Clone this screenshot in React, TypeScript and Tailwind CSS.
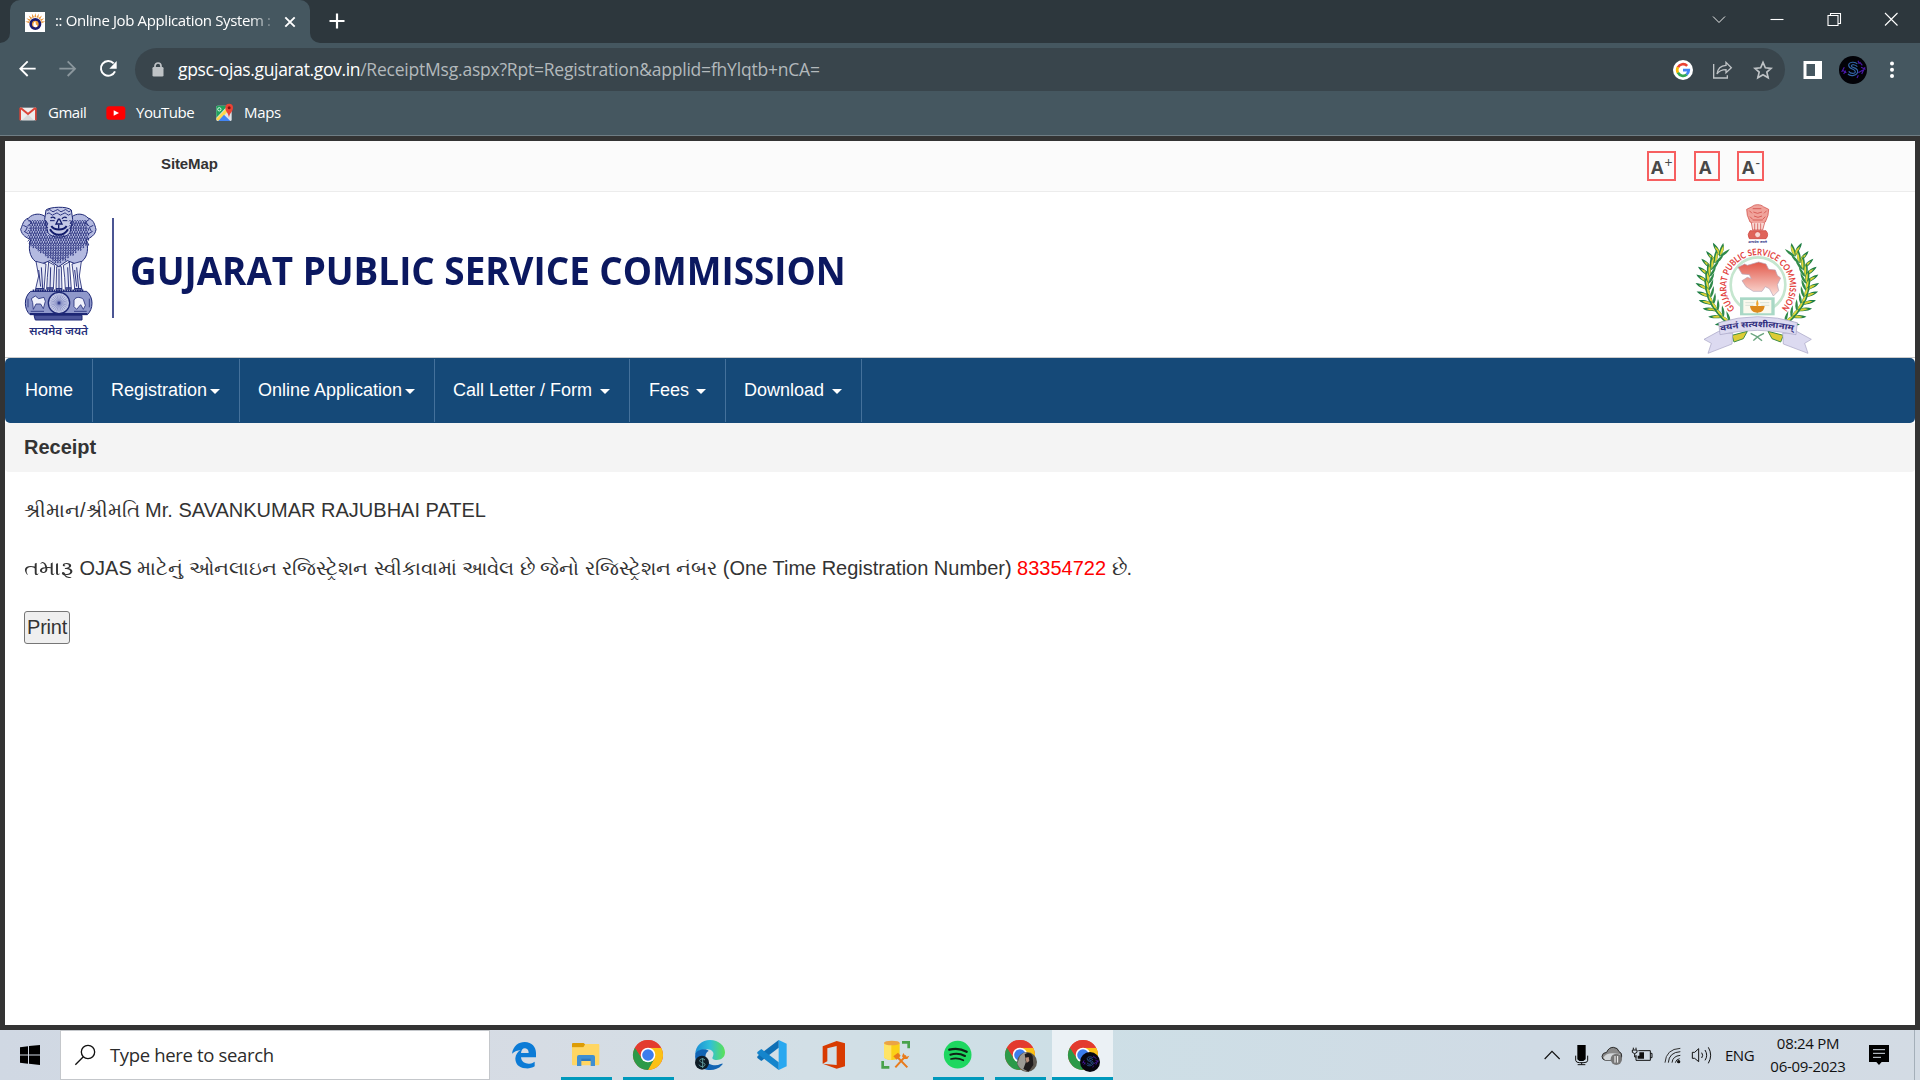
import React from "react";

const UI = "font-['Open_Sans','Noto_Sans',sans-serif]";

/* ---------- Browser chrome ---------- */

function Favicon() {
  const rays = [-80, -60, -40, -20, 0, 20, 40, 60, 80];
  return (
    <svg width="20" height="20" viewBox="0 0 60 60" className="shrink-0">
      <rect width="60" height="60" fill="#fff" />
      {rays.map((a) => (
        <path key={a} d="M28 16 L31 3 L34 16Z" fill="#e8953a" transform={`rotate(${a} 31 34)`} />
      ))}
      <circle cx="31" cy="36" r="14" fill="#f4a23c" stroke="#1a1a6e" strokeWidth="8" />
      <path d="M31 28 C22 34 24 46 31 46 C39 46 38 38 33 38Z" fill="#fff" />
    </svg>
  );
}

function TabStrip() {
  return (
    <div className="flex h-[43px] bg-[#2d373d] text-white">
      <div className="flex w-[10px] items-end bg-[#455760]">
        <div className="h-full w-full rounded-br-[10px] bg-[#2d373d]" />
      </div>
      <div className="flex h-[43px] w-[300px] items-center rounded-t-[10px] bg-[#455760] pl-[15px] pr-[14px]">
        <Favicon />
        <span
          className={`-mt-[2px] ml-[10px] w-[222px] whitespace-nowrap text-[15px] tracking-[-0.38px] [mask-image:linear-gradient(to_right,black_195px,transparent_224px)] ${UI}`}
        >
          :: Online Job Application System :
        </span>
        <svg width="12" height="12" viewBox="0 0 12 12" className="ml-[7px] shrink-0">
          <path d="M1.3 1.3 L10.7 10.7 M10.7 1.3 L1.3 10.7" stroke="#fff" strokeWidth="1.9" />
        </svg>
      </div>
      <div className="w-[10px] bg-[#455760]">
        <div className="h-full w-full rounded-bl-[10px] bg-[#2d373d]" />
      </div>
      <svg width="16" height="16" viewBox="0 0 16 16" className="ml-[9px] mt-[13px]">
        <path d="M8 0.5 V15.5 M0.5 8 H15.5" stroke="#fff" strokeWidth="2.2" />
      </svg>
      <div className="ml-auto flex">
        <WindowButton>
          <path d="M2 5.5 L8 11.5 L14 5.500" strokeWidth="0.9" />
        </WindowButton>
        <WindowButton>
          <path d="M1.5 8.5 H14.5" />
        </WindowButton>
        <WindowButton>
          <path d="M2 4.5 H12 V14.5 H2Z M4.5 4 V2.5 H14.5 V12.5 H12.5" />
        </WindowButton>
        <WindowButton>
          <path d="M2 2 L14.5 14.5 M14.5 2 L2 14.5" />
        </WindowButton>
      </div>
    </div>
  );
}

function WindowButton({ children }: { children: React.ReactNode }) {
  return (
    <div className="flex h-[37px] w-[57.3px] items-center justify-center">
      <svg width="16" height="16" viewBox="0 0 16 16" fill="none" stroke="#fff" strokeWidth="1.1">
        {children}
      </svg>
    </div>
  );
}

function GoogleIcon() {
  return (
    <svg width="20" height="20" viewBox="0 0 60 60">
      <circle cx="30" cy="30" r="30" fill="#fff" />
      <g fill="none" strokeWidth="8">
        <path d="M14.8 22 A17.5 17.5 0 0 1 42.5 17.6" stroke="#ea4335" />
        <path d="M14.8 38.5 A17.5 17.5 0 0 1 14.8 21.5" stroke="#fbbc05" />
        <path d="M41.5 43.5 A17.5 17.5 0 0 1 14.8 38" stroke="#34a853" />
        <path d="M30 30.5 H47.3 A17.5 17.5 0 0 1 41 43.4" stroke="#4285f4" />
      </g>
    </svg>
  );
}

function SAvatar({ size }: { size: number }) {
  return (
    <svg width={size} height={size} viewBox="0 0 84 84">
      <circle cx="42" cy="42" r="42" fill="#020207" />
      <SAvatarArt />
    </svg>
  );
}

function SAvatarArt() {
  return (
    <g>
      <g fill="none" stroke="#4a18a8" strokeWidth="3.500">
        <path d="M8 48 L16 34 M14 54 L20 44 M10 42 L22 50 M62 18 L70 28 M66 34 L80 40 M58 50 L72 42 M68 54 L78 34 M54 66 L58 58 M57 14 L61 24" />
      </g>
      <path
        d="M55 24 C49 16 29 17 29 28 C29 41 49 37 49 47 C49 54 35 54 29 46 M55 32 C49 25 37 24 37 30 C37 36 56 34 56 46 C56 60 34 62 27 54"
        fill="none"
        stroke="#3263a6"
        strokeWidth="3.500"
      />
    </g>
  );
}

function Toolbar() {
  return (
    <div className="flex h-[48px] items-center bg-[#455760] pt-[5px]">
      <svg width="135" height="43" viewBox="0 144 405 129" fill="none" strokeWidth="5.5">
        <path d="M107 206 H61 M83 184 L61 206 L83 228" stroke="#fff" />
        <path d="M178 206 H225 M203 184 L225 206 L203 228" stroke="#8b979d" />
        <path d="M341 190 A22 22 0 1 0 345 214" stroke="#fff" strokeWidth="6" />
        <path d="M350 183 V206 H328Z" fill="#fff" />
      </svg>
      <div className="flex h-[43px] w-[1650px] items-center rounded-full bg-[#39454c]">
        <svg width="12" height="15" viewBox="0 0 12 15" className="ml-[17px]">
          <path d="M3 6 V4 A3 3 0 0 1 9 4 V6" fill="none" stroke="#bfc3c6" strokeWidth="1.7" />
          <rect x="0.5" y="5" width="11" height="9.5" rx="1.3" fill="#bfc3c6" />
        </svg>
        <div className={`-mt-px ml-[14px] whitespace-nowrap text-[17.5px] leading-[24px] ${UI}`}>
          <span className="tracking-[-0.36px] text-white">gpsc-ojas.gujarat.gov.in</span>
          <span className="tracking-[-0.21px] text-[#b3b9bc]">
            /ReceiptMsg.aspx?Rpt=Registration&amp;applid=fhYlqtb+nCA=
          </span>
        </div>
        <div className="ml-auto mr-[12px] flex items-center gap-[20px]">
          <GoogleIcon />
          <svg width="20" height="20" viewBox="340 180 60 60" fill="none" stroke="#bfc3c6" strokeWidth="4">
            <path d="M342 192 V234 H383 V226" />
            <path d="M352 222 C354 204 364 197 379 196 V187 L395 203 L379 218 V209 C366 209 358 213 352 222Z" />
          </svg>
          <svg width="20" height="20" viewBox="457 180 60 60" fill="none" stroke="#bfc3c6" strokeWidth="5">
            <path d="M487 187 L494 203.500 L511.500 205 L498.500 216.500 L502.500 233.500 L487 224.500 L471.500 233.500 L475.500 216.500 L462.500 205 L480 203.500Z" />
          </svg>
        </div>
      </div>
      <svg width="20" height="20" viewBox="0 0 20 20" className="ml-[18px]">
        <path d="M0.500 1 H19 V19 H0.500Z M3.500 4 V16 H12 V4Z" fill="#fff" fillRule="evenodd" />
      </svg>
      <div className="ml-[16px]">
        <SAvatar size={28} />
      </div>
      <svg width="6" height="20" viewBox="0 0 6 20" className="ml-[22px]" fill="#fff">
        <circle cx="3" cy="3.500" r="2" />
        <circle cx="3" cy="9.800" r="2" />
        <circle cx="3" cy="16" r="2" />
      </svg>
    </div>
  );
}

function Bookmarks() {
  return (
    <div
      className={`flex h-[45px] items-center border-b border-[#6f7d84] bg-[#455760] text-[15px] text-white ${UI}`}
    >
      <svg width="20" height="20" viewBox="0 0 60 60" className="ml-[18px]">
        <path d="M6 14 H54 V52 H6Z" fill="#ececec" />
        <path d="M12 52 L30 34 L48 52Z" fill="#d9d9d9" />
        <path d="M8 15 L30 33 L52 15" fill="none" stroke="#db4437" strokeWidth="6" />
        <path d="M6.500 14 V52 M53.500 14 V52" stroke="#db4437" strokeWidth="5" />
      </svg>
      <span className="-mt-[2px] ml-[10px] w-[38px] whitespace-nowrap tracking-[-0.5px]">Gmail</span>
      <svg width="20" height="20" viewBox="0 0 60 60" className="ml-[20px]">
        <rect x="1" y="10" width="57" height="40" rx="9" fill="#f00" />
        <path d="M23 22 L39 30 L23 38Z" fill="#fff" />
      </svg>
      <span className="-mt-[2px] ml-[10px] w-[58px] whitespace-nowrap tracking-[-0.5px]">YouTube</span>
      <svg width="20" height="20" viewBox="643 308 60 60" className="ml-[20px]">
        <rect x="650" y="316" width="46" height="46" rx="4" fill="#dfe3e6" />
        <path d="M650 320 Q650 316 654 316 H684 L650 352Z" fill="#1fa35c" />
        <path d="M649 356 L682 322 L688 330 L656 362Z" fill="#ffd84a" />
        <path d="M656 362 L673 343 L692 362Z" fill="#4285f4" />
        <circle cx="659" cy="327" r="5" fill="none" stroke="#fff" strokeWidth="2.500" />
        <path d="M688 352 C687 338 677 334 677 322 A11.500 11.500 0 0 1 700 322 C700 334 689 338 688 352Z" fill="#ea4335" />
        <circle cx="688.500" cy="322" r="4.500" fill="#811411" />
      </svg>
      <span className="-mt-[2px] ml-[10px] whitespace-nowrap tracking-[-0.35px]">Maps</span>
    </div>
  );
}

/* ---------- Emblems ---------- */

function lionCurls() {
  const marks: React.ReactNode[] = [];
  for (let r = 0; r < 17; r++) {
    const y = 92 + r * 7.5;
    const half = r < 3 ? 84 : r < 10 ? 88 : 88 - (r - 9) * 11;
    for (let x = -half; x <= half; x += 7.5) {
      const px = 175 + x + (r % 2 ? 3.7 : 0);
      if (Math.abs(px - 175) < 34 && y < 136) continue;
      marks.push(<path key={`${r}-${x}`} d={`M${px - 4} ${y + 2} q3 -6 6 0 t-2 4`} />);
    }
  }
  return marks;
}

function AshokaEmblem() {
  return (
    <svg width="87" height="137" viewBox="45 39 261 411" className="shrink-0">
      <g fill="#b4bae0" stroke="#1d2775" strokeWidth="3" strokeLinejoin="round">
        <path d="M138 82 C124 68 98 70 86 84 C68 90 68 106 62 118 C66 138 80 142 92 150 C84 172 88 200 106 214 L124 222 L150 212 L176 230 L202 212 L228 222 L246 214 C264 200 266 172 258 150 C272 142 286 136 288 118 C284 104 282 90 264 84 C252 70 228 68 214 82Z" />
        <path
          d="M108 214 L116 258 L106 300 H132 L138 222Z M146 216 L142 262 L140 298 H160 L164 226Z M170 230 L168 300 H186 L184 230Z M190 226 L194 262 L196 298 H214 L208 216Z M216 222 L222 268 L224 300 H246 L238 258 L244 214Z"
          fill="#e3e6f5"
          strokeWidth="2.500"
        />
        <path d="M138 60 C150 50 202 48 214 60 L218 88 L210 128 C200 146 154 146 144 128 L134 88Z" fill="#c3c8e6" />
      </g>
      <g fill="none" stroke="#27307c" strokeWidth="2.900">
        {lionCurls()}
        <path d="M142 62 q8 -7 12 0 t12 0 t12 0 t12 0 t12 0 t10 0 M140 72 q8 -7 12 0 t12 0 t12 0 t12 0 t12 0 t12 0" />
        <path d="M136 90 l8 12 M134 102 l10 12 M218 90 l-8 12 M220 102 l-10 12 M70 106 l12 6 l-6 12 M280 106 l-12 6 l6 12 M82 88 l14 10 l-14 10 M268 88 l-14 10 l14 10 M72 124 l14 8 M278 124 l-14 8" />
        <path d="M124 232 L128 296 M116 240 L122 290 M152 232 L150 296 M177 236 V298 M203 232 L206 296 M230 232 L236 296 M224 240 L230 290" />
        <path d="M108 296 h24 M140 294 h20 M168 296 h18 M196 294 h18 M224 296 h22" strokeWidth="4" />
      </g>
      <g fill="none" stroke="#111b6b" strokeWidth="4">
        <path d="M152 84 q8 -6 14 2 M186 86 q8 -8 14 -2 M176 86 L168 102 H186 L178 86" />
        <path d="M150 92 h14 M188 92 h14" strokeWidth="3" />
        <path d="M154 108 C162 122 192 122 200 108 M150 118 C162 140 192 140 204 118" strokeWidth="6" />
        <path d="M176 104 V116" />
      </g>
      <g stroke="#1d2775" strokeWidth="3">
        <path d="M92 304 H260 C282 322 280 358 262 374 H90 C72 358 70 322 92 304Z" fill="#8f98cb" />
        <path d="M98 302 H252" strokeWidth="7" strokeDasharray="5 2" />
        <path d="M90 372 H262" strokeWidth="6" />
        <path d="M102 376 H246 V390 H106Z" fill="#4b549a" />
        <circle cx="177" cy="339" r="32" fill="#c3c8e6" strokeWidth="4" />
      </g>
      <g stroke="#6e77b4" strokeWidth="1.500">
        {Array.from({ length: 24 }, (_, i) => (
          <path key={i} d="M177 339 V313" transform={`rotate(${i * 15} 177 339)`} />
        ))}
        <circle cx="177" cy="339" r="5" fill="#36408c" />
      </g>
      <g fill="#f0f2fb" stroke="#27307c" strokeWidth="2.500">
        <path d="M94 326 L106 318 L116 326 L132 322 L136 334 L130 356 L122 342 L108 342 L100 358 L98 338Z" />
        <path d="M222 330 C228 318 244 322 250 328 L256 346 L250 358 L242 344 L230 358 L222 350Z" />
        <path d="M84 326 V352 M268 326 V352 M92 364 H132 M222 364 H260" fill="none" />
      </g>
      <text
        x="88"
        y="434"
        textLength="176"
        lengthAdjust="spacingAndGlyphs"
        fill="#27307c"
        fontSize="33"
        fontWeight="600"
        fontFamily="'Noto Sans', 'Noto Sans Devanagari', sans-serif"
      >
        सत्यमेव जयते
      </text>
    </svg>
  );
}

function LaurelBranch() {
  const nodes: [number, number, number][] = [
    [182, 186, 16], [166, 206, 6], [154, 226, 0], [146, 247, -6], [142, 268, -10],
    [141, 290, -16], [145, 312, -22], [152, 334, -28], [164, 354, -36], [180, 374, -44], [198, 392, -54],
  ];
  return (
    <g>
      <path d="M188 172 C150 220 128 290 160 350 C180 386 210 404 240 420" fill="none" stroke="#5c8f3e" strokeWidth="3" />
      {nodes.map(([x, y, a]) => (
        <g key={y} transform={`translate(${x} ${y}) rotate(${a})`}>
          <path d="M0 14 C-8 4 -24 -2 -30 -20 C-14 -14 0 -4 0 14Z" fill="#1f7f45" />
          <path d="M0 12 C-8 4 -16 0 -22 -12 C-10 -8 0 0 0 12Z" fill="#d9cf35" />
          <path d="M0 14 C-8 -2 -4 -16 0 -28 C10 -14 8 4 0 14Z" fill="#2a8546" />
          <path d="M1 12 C-2 0 0 -12 3 -20 C8 -10 7 2 1 12Z" fill="#e2d83c" />
          <path d="M0 14 C6 0 14 -8 24 -16 C20 0 12 10 0 14Z" fill="#2f8a4a" />
        </g>
      ))}
    </g>
  );
}

function CommissionSeal() {
  return (
    <svg width="200" height="165" viewBox="0 6 600 495" className="shrink-0">
      <defs>
        <path id="sealArc" d="M225 356 A95 95 0 1 1 363 356" />
        <path id="ribbonArc" d="M182 424 Q292 398 406 424" />
        <linearGradient id="stateFill" x1="0" y1="0" x2="0" y2="1">
          <stop offset="0" stopColor="#e2584a" />
          <stop offset="1" stopColor="#fbe0da" />
        </linearGradient>
      </defs>
      <g stroke="#cc3c36" strokeWidth="2" fill="#f0a39b">
        <path d="M276 50 C284 42 302 42 310 50 L326 58 L324 76 L316 96 L306 100 H280 L270 96 L262 76 L260 58Z" />
        <path d="M274 98 L278 120 H308 L314 98" fill="#f9d8d4" />
        <path d="M270 122 H318 Q328 134 318 146 H268 Q260 134 270 122Z" fill="#e0645a" />
        <circle cx="293" cy="134" r="9" fill="#f9d8d4" />
        <path d="M268 62 l8 8 M320 62 l-8 8 M278 56 h26 M280 66 q12 8 26 0 M282 78 q12 8 24 0 M284 100 V120 M293 100 V120 M302 100 V120 M270 80 l8 8 M316 80 l-8 8 M278 90 h30" fill="none" />
      </g>
      <text x="265" y="160" textLength="56" lengthAdjust="spacingAndGlyphs" fontSize="11" fontWeight="700" fill="#3b3b8c" fontFamily="'Noto Sans', sans-serif">
        सत्यमेव जयते
      </text>
      <LaurelBranch />
      <g transform="translate(584 0) scale(-1 1)">
        <LaurelBranch />
      </g>
      <circle cx="294" cy="285" r="105" fill="#fff" />
      <circle cx="294" cy="284" r="82" fill="#fff" stroke="#c5e6cf" strokeWidth="8" />
      <path
        d="M234 232 L254 222 L262 226 L296 216 L318 222 L326 238 L346 240 L352 256 L362 264 L352 284 L356 302 L340 318 L328 296 L316 290 L306 304 L280 304 L258 290 L246 272 L262 262 L274 266 L268 254 L246 252Z"
        fill="url(#stateFill)"
        stroke="#b7a5b8"
        strokeWidth="2"
      />
      <text fontSize="27" fontWeight="700" fill="#e2413c" fontFamily="Lato, sans-serif">
        <textPath href="#sealArc" textLength="440" lengthAdjust="spacingAndGlyphs">
          GUJARAT PUBLIC SERVICE COMMISSION
        </textPath>
      </text>
      <rect x="240" y="322" width="104" height="54" fill="#a9d8c6" />
      <path d="M250 330 H290 V370 H250Z M294 330 H334 V370 H294Z" fill="#fbf9ee" />
      <path d="M256 338 H284 M256 346 H280 M300 338 H328 M304 346 H328" stroke="#c9d8cc" strokeWidth="2" />
      <path d="M270 348 H314 C312 364 302 368 292 368 C282 368 272 364 270 348Z" fill="#dd8a1d" />
      <path d="M292 330 Q299 342 292 350 Q285 342 292 330Z" fill="#f2a22a" />
      <path d="M272 430 Q292 438 306 452 M312 430 Q292 438 280 452" fill="none" stroke="#6aa57f" strokeWidth="4" />
      <path d="M216 436 L262 424 L250 446 L222 456Z M370 436 L324 424 L336 446 L362 456Z" fill="#ddcb35" stroke="#3f8f49" strokeWidth="3" />
      <g fill="#dcdaf0" stroke="#a5a2c2" strokeWidth="2">
        <path d="M176 424 L132 448 L154 460 L144 490 L216 462 L218 430Z" />
        <path d="M410 424 L454 448 L434 460 L444 490 L370 462 L368 430Z" />
        <path d="M176 398 Q292 362 412 398 L408 434 Q292 408 180 434Z" />
      </g>
      <text fontSize="25" fontWeight="700" fill="#33307f" fontFamily="'Noto Sans', sans-serif">
        <textPath href="#ribbonArc" textLength="220" lengthAdjust="spacingAndGlyphs">
          वयनं सत्यशीलानाम्
        </textPath>
      </text>
    </svg>
  );
}

/* ---------- Web page ---------- */

function MenuItem({ label, width, caret }: { label: string; width: string; caret?: string }) {
  return (
    <div className={`flex h-[63px] items-center border-r border-[#44719b] ${width}`}>
      <span className="whitespace-nowrap">{label}</span>
      {caret && (
        <span
          className={`h-0 w-0 border-x-[5px] border-t-[5px] border-x-transparent border-t-white ${caret}`}
        />
      )}
    </div>
  );
}

function WebPage() {
  return (
    <div className="h-[894px] border-[5px] border-[#333] bg-white font-['Liberation_Sans',Arial,sans-serif] text-[#333]">
      <div className="flex h-[51px] items-start border-b border-[#ececec] bg-[#fbfbfb]">
        <span className="ml-[156px] mt-[12px] text-[15px] font-bold leading-[22px] tracking-[-0.1px]">SiteMap</span>
        <div className="ml-auto mr-[151px] mt-[10px] flex font-['Open_Sans',sans-serif] font-bold text-[#484848]">
          <span className="flex h-[30px] w-[29px] border-2 border-[#f65f60] pl-[2px] pt-[3px] text-[18px] leading-[22px]">
            A<span className="ml-px text-[14px] font-normal leading-[13px]">+</span>
          </span>
          <span className="ml-[18px] flex h-[30px] w-[26px] border-2 border-[#f65f60] pl-[3px] pt-[3px] text-[18px] leading-[22px]">
            A
          </span>
          <span className="ml-[17px] flex h-[30px] w-[27px] border-2 border-[#f65f60] pl-[3px] pt-[3px] text-[18px] leading-[22px]">
            A<span className="ml-px text-[14px] font-normal leading-[13px]">-</span>
          </span>
        </div>
      </div>
      <div className="flex h-[166px] items-start border-b border-[#ccc]">
        <div className="ml-[10px] mt-[11px]">
          <AshokaEmblem />
        </div>
        <div className="ml-[10px] mt-[26px] h-[100px] w-[2px] bg-[#4b5593]" />
        <h1 className="ml-[16px] mt-[53px] w-[712px] origin-left scale-x-[0.944] whitespace-nowrap font-['Open_Sans',sans-serif] text-[39px] font-bold leading-[50px] text-[#0b1860]">
          GUJARAT PUBLIC SERVICE COMMISSION
        </h1>
        <div className="ml-auto mr-[55px]">
          <CommissionSeal />
        </div>
      </div>
      <div className="flex h-[65px] items-center rounded-[5px] bg-[#154978] text-[18px] text-white">
        <MenuItem label="Home" width="w-[88px] pl-[20px]" />
        <MenuItem label="Registration" width="w-[147px] pl-[18px]" caret="ml-[3px] mt-[2px]" />
        <MenuItem label="Online Application" width="w-[195px] pl-[18px]" caret="ml-[3px] mt-[2px]" />
        <MenuItem label="Call Letter / Form" width="w-[195px] pl-[18px]" caret="ml-[8px] mt-[2px]" />
        <MenuItem label="Fees" width="w-[96px] pl-[19px]" caret="ml-[7px] mt-[2px]" />
        <MenuItem label="Download" width="w-[136px] pl-[18px]" caret="ml-[8px] mt-[2px]" />
      </div>
      <div className="flex h-[49px] items-center rounded-b-[4px] bg-[#f4f4f4] pb-[2px] pl-[19px] text-[20px] font-bold">
        Receipt
      </div>
      <div className="pl-[19px] text-[20px] leading-[28px]">
        <p className="mt-[24px] whitespace-nowrap">શ્રીમાન/શ્રીમતિ Mr. SAVANKUMAR RAJUBHAI PATEL</p>
        <p className="mt-[30px] whitespace-nowrap">
          <span className="inline-block w-[50px] origin-left scale-x-[1.16]">તમારૂ</span>
          <span className="tracking-[-0.01px]">
            {" "}OJAS માટેનું ઓનલાઇન રજિસ્ટ્રેશન સ્વીકાવામાં આવેલ છે જેનો રજિસ્ટ્રેશન નંબર (One Time
            Registration Number) <span className="text-[#f00]">83354722</span> છે.
          </span>
        </p>
        <button className="mt-[29px] flex h-[33px] w-[46px] items-center justify-center rounded-[3px] border border-[#767676] bg-[#efefef] pb-[2px] tracking-[-0.25px]">
          Print
        </button>
      </div>
    </div>
  );
}

/* ---------- Taskbar ---------- */

function AppIcon({ box, open, active, children }: { box: string; open?: boolean; active?: boolean; children: React.ReactNode }) {
  return (
    <div className={`flex h-[50px] flex-col items-center pt-[7px] ${active ? "ml-px w-[61px] bg-[#ebf1f5]" : "w-[62px]"}`}>
      <svg width="36" height="36" viewBox={box}>
        {children}
      </svg>
      {open && <div className={`mt-[4px] h-[3px] bg-[#0099bc] ${active ? "w-[61px]" : "w-[51px]"}`} />}
    </div>
  );
}

function ChromeMark({ cx }: { cx: number }) {
  return (
    <g transform={`translate(${cx} 120)`}>
      <circle r="45" fill="#ea4335" />
      <path d="M0 -21 H40 A45 45 0 0 1 0 45 L20 8Z" fill="#fbc116" />
      <path d="M-39 -22.500 A45 45 0 0 0 0 45 L19 11 L-18 11Z" fill="#2c9a48" />
      <path d="M-39 -22.500 A45 45 0 0 1 39 -22.500 H0 L-18 10Z" fill="#e33b2e" />
      <circle r="22" fill="#fff" />
      <circle r="17.500" fill="#3b7ded" />
    </g>
  );
}

function Tray() {
  return (
    <div className={`ml-auto flex h-full items-center text-[#111] ${UI}`}>
      <svg width="26" height="40" viewBox="60 60 78 120" fill="none" stroke="#111" strokeWidth="3.500">
        <path d="M74 132 L96 109 L119 132" />
      </svg>
      <svg width="30" height="40" viewBox="138 60 90 120">
        <path d="M172 90 H197 V133 L190 138 H178 L172 133Z" />
        <path d="M167 122 V136 Q168 143 178 143 H192 Q203 143 203 136 V122 M185 143 V149 M173 149 H196" fill="none" stroke="#111" strokeWidth="3" />
      </svg>
      <svg width="31" height="40" viewBox="228 60 93 120">
        <path d="M256 136 Q246 134 246 124 Q247 113 260 112 Q266 97 280 97 Q294 98 297 110 Q306 113 305 123 Q305 136 292 136Z" fill="#8a8a8a" stroke="#2b2b2b" strokeWidth="3" />
        <path d="M250 128 Q262 108 300 118 L292 136 H256Z" fill="#d2d6d9" />
        <circle cx="289" cy="133" r="17" fill="#777" />
        <path d="M285 123 V143 M293 123 V143" stroke="#fff" strokeWidth="3" />
      </svg>
      <svg width="31" height="40" viewBox="321 60 93 120" fill="none" stroke="#111" strokeWidth="3">
        <path d="M355 107 H391 V136 H348 V120 M391 115 H396 V128 H391" />
        <path d="M358 112 H372 V131 H353 V122 H358Z" fill="#111" stroke="none" />
        <path d="M340 98 V104 M348 98 V104 M337 105 H351 V112 Q344 120 337 112Z M344 116 V126 H349" />
      </svg>
      <svg width="28" height="40" viewBox="414 60 84 120" fill="none" stroke="#333" strokeWidth="3">
        <path d="M435 143 Q438 102 481 100" />
        <path d="M445 143 Q447 112 481 110" stroke="#222" />
        <path d="M456 143 Q458 123 481 121" stroke="#222" />
        <path d="M466 143 Q468 133 479 131" stroke="#222" />
        <circle cx="476" cy="140" r="5" fill="#111" stroke="none" />
      </svg>
      <svg width="32" height="40" viewBox="498 60 96 120" fill="none" stroke="#111" strokeWidth="3">
        <path d="M517 112 H524 L536 101 V140 L524 130 H517Z" />
        <path d="M545 113 Q551 121 545 129 M555 105 Q565 121 555 136 M565 97 Q579 120 565 145" />
      </svg>
      <span className="ml-[7px] w-[30px] whitespace-nowrap text-[15px] tracking-[-0.5px]">ENG</span>
      <div className="ml-[14px] w-[78px] whitespace-nowrap text-center text-[15px] leading-[23px] tracking-[-0.3px]">
        <div>08:24 PM</div>
        <div>06-09-2023</div>
      </div>
      <svg width="20" height="20" viewBox="1047 90 60 60" className="ml-[22px]">
        <path d="M1047 90 H1107 V141 H1085 L1077 150 L1069 141 H1047Z" />
        <path d="M1059 104 H1095 M1059 115 H1095 M1059 127 H1083" stroke="#d3dbe4" strokeWidth="3" />
      </svg>
      <div className="ml-[25px] h-full w-[6px] border-l border-[#a4afb9]" />
    </div>
  );
}

function Taskbar() {
  return (
    <div className="flex h-[50px] bg-[linear-gradient(90deg,#d0d8e3_0%,#d6dce4_28%,#d2dfe6_42%,#cddfe6_55%,#d0dbe5_80%,#d3dbe4_100%)]">
      <div className="flex w-[60px] items-center justify-center">
        <svg width="20" height="20" viewBox="60 90 60 60">
          <path d="M60 97 L84 93.500 V118.500 H60Z M87 93 L120 90 V118.500 H87Z M60 121.500 H84 V146 L60 143Z M87 121.500 H120 V150 L87 146.500Z" />
        </svg>
      </div>
      <div className={`flex h-[50px] w-[430px] items-center border border-[#c4c7cb] bg-white ${UI}`}>
        <svg width="22" height="22" viewBox="222 87 66 66" fill="none" stroke="#111" strokeWidth="4" className="ml-[13px]">
          <circle cx="264" cy="111" r="20" />
          <path d="M250 125 L226 149" />
        </svg>
        <span className="ml-[14px] whitespace-nowrap text-[18.500px] tracking-[-0.34px] text-[#2b2b2b]">Type here to search</span>
      </div>
      <div className="ml-[3px] flex">
        <AppIcon box="48 66 108 108">
          <path
            d="M66 116 C70 92 86 81 104 81 C126 81 138 96 138 114 V127 H93 C94 142 108 147 118 146 C126 145 131 142 134 140 V154 C126 159 116 161 106 160 C86 159 76 146 76 130 C77 118 84 109 92 105 C83 106 73 109 66 116Z M93 114 H116 C116 102 108 100 104 100 C98 100 94 106 93 114Z"
            fill="#0c7bd6"
            fillRule="evenodd"
          />
        </AppIcon>
        <AppIcon box="234 66 108 108" open>
          <path d="M246 87 Q246 84 249 84 H281 L285 88 V98 H246Z" fill="#dd9c05" />
          <path d="M246 97 H280 L286 87 H326 Q328 87 328 90 V148 Q328 151 325 151 H249 Q246 151 246 148Z" fill="#ffd663" />
          <path d="M261 153 V126 Q261 120 267 120 H309 Q315 120 315 126 V153 H302 V138 H274 V153Z" fill="#3f8fd2" />
          <path d="M274 131 H302 V138 H274Z" fill="#2f78bb" />
        </AppIcon>
        <AppIcon box="420 66 108 108" open>
          <ChromeMark cx={474} />
        </AppIcon>
        <AppIcon box="606 66 108 108">
          <defs>
            <linearGradient id="edgeTop" x1="0" x2="1">
              <stop offset="0" stopColor="#1b8fd6" />
              <stop offset="0.5" stopColor="#31bfd8" />
              <stop offset="1" stopColor="#5be255" />
            </linearGradient>
          </defs>
          <path d="M616 118 C616 92 636 75 660 75 C686 75 705 92 705 112 C705 128 693 135 680 135 C670 135 665 131 668 126 C676 112 664 102 650 103 C634 103 622 110 616 118Z" fill="url(#edgeTop)" />
          <path d="M616 116 C622 102 650 98 656 108 C648 112 644 122 648 134 C654 150 676 155 692 147 C700 143 699 147 695 151 C684 164 666 167 650 164 C628 160 612 140 616 116Z" fill="#1164b4" />
          <circle cx="636" cy="143" r="21" fill="#0e1c26" />
          <path d="M645 135 C638 128 626 133 630 139 C634 145 646 142 645 150 C642 157 630 156 627 149 M638 129 V159" fill="none" stroke="#5f9a9c" strokeWidth="3" />
        </AppIcon>
        <AppIcon box="792 66 108 108">
          <path d="M866 75 L890 86 V154 L866 165Z" fill="#29a8f0" />
          <path d="M866 75 V98 L814 138 L803 130 Q800 127 803 123Z" fill="#0f6fb5" />
          <path d="M866 165 V142 L814 102 L803 110 Q800 113 803 117Z" fill="#1585cc" />
        </AppIcon>
        <AppIcon box="-12 66 108 108">
          <path d="M8 94 L50 78 L75 85 V154 L50 161 L8 146 L50 150 V93 L22 100 V139 L8 146Z" fill="#d83b01" />
        </AppIcon>
        <AppIcon box="174 66 108 108">
          <path d="M192 84 V128 Q214 142 239 128 V84Z" fill="#fbd116" />
          <path d="M192 84 V128 Q202 135 214 135 V84Z" fill="#ffe466" />
          <ellipse cx="215.500" cy="84" rx="23.500" ry="7" fill="#eba444" />
          <path d="M246 82 H266 V100 M188 138 V157 H208" fill="none" stroke="#48a24c" strokeWidth="8" />
          <path d="M226 157 L258 122 M262 157 L232 126" stroke="#e87b1c" strokeWidth="6" />
          <path d="M220 124 L234 113 L242 122 L230 134Z M250 114 L258 126 L268 122 L262 132 L252 132 L246 124Z" fill="#e87b1c" />
        </AppIcon>
        <AppIcon box="360 66 108 108" open>
          <circle cx="413" cy="119" r="41.500" fill="#1ed760" />
          <g fill="none" stroke="#102016" strokeLinecap="round">
            <path d="M388 104 Q416 97 440 110" strokeWidth="7" />
            <path d="M391 119 Q415 112 435 123" strokeWidth="6" />
            <path d="M393 132 Q413 127 430 136" strokeWidth="5" />
          </g>
        </AppIcon>
        <AppIcon box="546 66 108 108" open>
          <ChromeMark cx={600} />
          <circle cx="621" cy="141" r="30" fill="#5d5850" />
          <path d="M600 124 Q612 108 622 114 L616 134 L622 168 Q600 166 592 146Z" fill="#9c9a94" />
          <path d="M614 118 Q630 108 638 124 L640 150 L626 170 L610 162 L618 140Z" fill="#201c1d" />
          <path d="M616 128 L626 126 L628 138 L620 144Z" fill="#b78f7b" />
        </AppIcon>
        <AppIcon box="732 66 108 108" open active>
          <ChromeMark cx={786} />
          <circle cx="807" cy="141" r="30" fill="#07060f" />
          <g transform="translate(779 113) scale(0.67)">
            <SAvatarArt />
          </g>
        </AppIcon>
      </div>
      <Tray />
    </div>
  );
}

export default function App() {
  return (
    <div className="flex h-[1080px] w-[1920px] flex-col overflow-hidden">
      <TabStrip />
      <Toolbar />
      <Bookmarks />
      <WebPage />
      <Taskbar />
    </div>
  );
}
